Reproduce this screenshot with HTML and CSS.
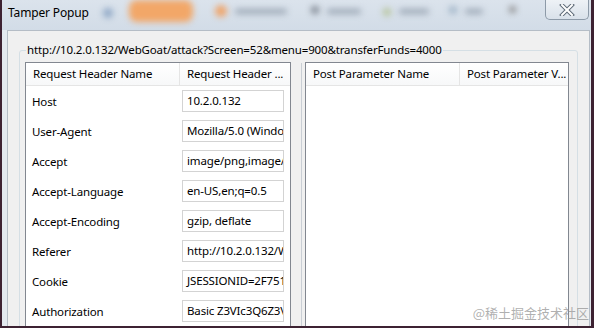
FILE: index.html
```html
<!DOCTYPE html>
<html lang="en">
  <head>
    <meta charset="UTF-8" />
    <title>Tamper Popup</title>
    <link rel="stylesheet" href="styles.css">
  </head>
  <body>
    <div class="window">
      <div class="titlebar">
        <span class="title">Tamper Popup</span>
        <span class="blob blue"></span>
        <span class="blob orange"></span>
        <span class="blob dot-orange"></span>
        <span class="blob smear w52"></span>
        <span class="blob dot-gray"></span>
        <span class="blob smear w34"></span>
        <span class="blob dot-green"></span>
        <span class="blob smear w30"></span>
        <span class="blob dot-blue"></span>
        <span class="blob smear w18"></span>
        <span class="blob dot-dark"></span>
        <div class="close">
          <svg width="16" height="12" viewBox="0 0 16 12">
            <path d="M3 1 L13 11 M13 1 L3 11" stroke="#5f6b78" stroke-width="4" stroke-linecap="square" fill="none"/>
            <path d="M3 1 L13 11 M13 1 L3 11" stroke="#ffffff" stroke-width="2" stroke-linecap="square" fill="none"/>
          </svg>
        </div>
      </div>

      <div class="client">
        <fieldset class="group">
          <legend>http://10.2.0.132/WebGoat/attack?Screen=52&amp;menu=900&amp;transferFunds=4000</legend>
          <div class="panes">
            <div class="list left">
              <div class="list-head">
                <div class="hcell first">Request Header Name</div>
                <div class="hcell">Request Header ...</div>
              </div>
              <div class="row"><span class="name">Host</span><span class="val">10.2.0.132</span></div>
              <div class="row"><span class="name">User-Agent</span><span class="val">Mozilla/5.0 (Windows NT 6.1)</span></div>
              <div class="row"><span class="name">Accept</span><span class="val">image/png,image/*;q=0.8</span></div>
              <div class="row"><span class="name">Accept-Language</span><span class="val">en-US,en;q=0.5</span></div>
              <div class="row"><span class="name">Accept-Encoding</span><span class="val">gzip, deflate</span></div>
              <div class="row"><span class="name">Referer</span><span class="val">http://10.2.0.132/WebGoat</span></div>
              <div class="row"><span class="name">Cookie</span><span class="val">JSESSIONID=2F751A</span></div>
              <div class="row"><span class="name">Authorization</span><span class="val">Basic Z3VIc3Q6Z3VIc3Q=</span></div>
            </div>
            <div class="list right">
              <div class="list-head">
                <div class="hcell first">Post Parameter Name</div>
                <div class="hcell">Post Parameter V...</div>
              </div>
            </div>
          </div>
        </fieldset>
      </div>
      <span class="watermark">@稀土掘金技术社区</span>
    </div>
  </body>
</html>
```

FILE: styles.css
```css
body {
  margin: 0;
  width: 594px;
  height: 328px;
  overflow: hidden;
  font-family: "Noto Sans", "Open Sans", sans-serif;
  font-size: 11.5px;
  letter-spacing: -0.15px;
  color: #000;
}

.window {
  position: relative;
  height: 328px;
  box-sizing: border-box;
  border-left: 2px solid #3d2232;
  border-right: 3px solid #3d2232;
  border-bottom: 2px solid #3d2232;
  background: #e3e9ef;
  display: flex;
  flex-direction: column;
  overflow: hidden;
}

/* title bar with the blurred taskbar behind it */
.titlebar {
  height: 30px;
  flex: none;
  display: flex;
  align-items: flex-start;
  background: linear-gradient(#dbe3ec, #d2dce7);
}

.title {
  margin: 5px 0 0 6px;
  font-size: 12px;
  line-height: 16px;
}

.blob {
  display: block;
  flex: none;
  filter: blur(3px);
  border-radius: 50%;
}

.blue {
  width: 10px;
  height: 10px;
  margin: 8px 0 0 14px;
  background: #8fa8c6;
}

.orange {
  width: 64px;
  height: 22px;
  margin: 0 0 0 16px;
  border-radius: 8px;
  background: #f2a768;
}

.dot-orange {
  width: 12px;
  height: 12px;
  margin: 5px 0 0 22px;
  background: #efa46a;
}

.smear {
  height: 5px;
  margin: 9px 0 0 8px;
  border-radius: 3px;
  background: #9aa6b4;
}

.w52 { width: 52px; }
.w34 { width: 34px; }
.w30 { width: 30px; }
.w18 { width: 18px; }

.dot-gray {
  width: 8px;
  height: 8px;
  margin: 6px 0 0 24px;
  background: #7d858f;
}

.dot-green {
  width: 8px;
  height: 8px;
  margin: 8px 0 0 22px;
  background: #b6c39a;
}

.dot-blue {
  width: 8px;
  height: 8px;
  margin: 6px 0 0 20px;
  background: #9eb3c6;
}

.dot-dark {
  width: 7px;
  height: 7px;
  margin: 6px 0 0 26px;
  background: #8a8a8a;
}

.close {
  width: 44px;
  height: 20px;
  margin-left: auto;
  margin-right: 2px;
  box-sizing: border-box;
  border: 1px solid #8d9aa8;
  border-top: none;
  border-radius: 0 0 5px 5px;
  background: linear-gradient(#eef2f6, #d9e1ea);
  display: flex;
  align-items: center;
  justify-content: center;
}

.client {
  flex: 1;
  margin: 0 1px 0 5px;
  border: 1px solid #b5bdc6;
  border-bottom: none;
  background: #f0f0f0;
  padding: 11px 0 0 11px;
  overflow: hidden;
}

.group {
  margin: 0;
  width: 559px;
  box-sizing: border-box;
  border: 1px solid #d5dfe5;
  border-radius: 3px;
  padding: 4px 5px 0 5px;
  height: 320px;
}

.group legend {
  padding: 0 1px;
  margin-left: 1px;
  line-height: 16px;
}

.panes {
  display: flex;
  gap: 14px;
  height: 100%;
}

.list {
  background: #fff;
  border: 1px solid #828790;
  height: 300px;
  flex: none;
}

.left {
  width: 264px;
}

.right {
  width: 262px;
  box-shadow: -4px 0 0 -1px #f0f0f0, -5px 0 0 -1px #c9ced4;
}

.list-head {
  display: flex;
  height: 22px;
  border-bottom: 1px solid #e5e5e5;
  background: linear-gradient(#ffffff, #f7f8f9);
}

.hcell {
  padding-left: 7px;
  line-height: 22px;
  white-space: nowrap;
  overflow: hidden;
}

.hcell.first {
  width: 146px;
  border-right: 1px solid #e5e5e5;
}

.row {
  display: flex;
  align-items: center;
  height: 30px;
}

.name {
  width: 150px;
  padding-left: 6px;
  flex: none;
}

.val {
  width: 102px;
  height: 22px;
  box-sizing: border-box;
  border: 1px solid #d3d3d3;
  padding: 0 4px;
  line-height: 20px;
  white-space: nowrap;
  overflow: hidden;
}

.watermark {
  position: absolute;
  right: 2px;
  bottom: 4px;
  font-family: "Noto Sans CJK SC", sans-serif;
  font-size: 13px;
  letter-spacing: 0;
  color: rgba(150, 150, 150, 0.75);
}
```
